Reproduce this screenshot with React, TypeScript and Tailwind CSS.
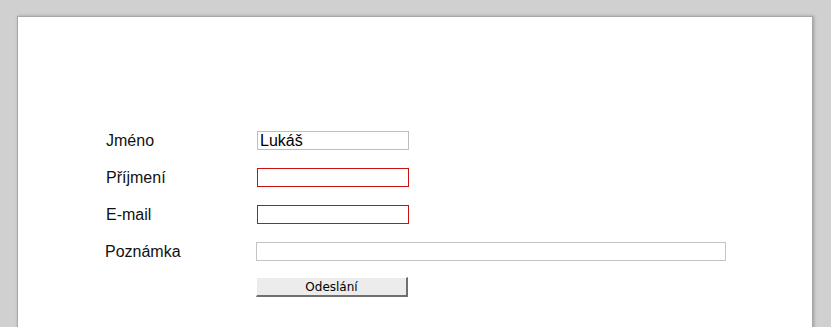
import React from 'react';

const font = { fontFamily: '"Liberation Sans", Arial, sans-serif' };

function Field({ label, children, shift }: { label: string; children: React.ReactNode; shift?: boolean }) {
  return (
    <>
      <label className={`flex h-[19px] items-center text-[16px] text-[#111] ${shift ? '' : 'pl-px'}`}>{label}</label>
      <div className="flex h-[19px] items-center">{children}</div>
    </>
  );
}

export default function App() {
  return (
    <div className="h-[327px] overflow-hidden bg-[#d0d0d0] pt-[16px]" style={font}>
      <div className="ml-[17px] mr-[18px] h-[340px] border border-[#a8a8a8] bg-white pl-[87px] pt-[114px] shadow-[1px_0_3px_rgba(0,0,0,0.25)]">
        <form className="grid grid-cols-[151px_auto] gap-y-[18px]">
          <Field label="Jméno">
            <input
              defaultValue="Lukáš"
              className="ml-px h-[19px] w-[152px] border border-[#bdbdbd] px-[2px] text-[16px] leading-none text-black outline-none"
            />
          </Field>
          <Field label="Příjmení">
            <input className="ml-px h-[19px] w-[152px] border border-[#cc1111] outline-none" />
          </Field>
          <Field label="E-mail">
            <input className="ml-px h-[19px] w-[152px] border border-[#cc1111] outline-none" />
          </Field>
          <Field label="Poznámka" shift>
            <input className="h-[19px] w-[470px] border border-[#c4c4c4] outline-none" />
          </Field>
          <div className="-mt-[5px]" />
          <div className="-mt-[5px]">
            <button
              type="button"
              className="h-[20px] w-[152px] border-t border-l border-t-white border-l-white border-r-2 border-b-2 border-r-[#6f6f6f] border-b-[#6f6f6f] bg-[#ececec] text-[12px] text-black"
              style={{ fontFamily: '"DejaVu Sans", sans-serif' }}
            >
              Odeslání
            </button>
          </div>
        </form>
      </div>
    </div>
  );
}
